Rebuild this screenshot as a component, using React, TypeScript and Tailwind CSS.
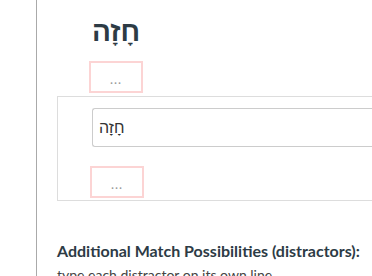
import React from 'react';

const PinkBox: React.FC = () => (
    <div className="w-[54px] h-[32px] border-2 border-[#fcd4d4] flex justify-center text-[13px] leading-none text-[#999] pt-[10px] tracking-[1px]">
        ...
    </div>
);

export default function App() {
    return (
        <div className="w-[372px] h-[276px] overflow-hidden bg-white" style={{ fontFamily: "Lato, 'DejaVu Sans', sans-serif" }}>
            <div className="ml-[36px] border-l border-[#aaa] pl-[20px] h-full">
                <div className="pl-[32px] pt-[10px]">
                    <div
                        className="text-[28px] font-bold text-[#2d3b45] leading-[44px] pl-[3px]"
                        style={{ fontFamily: "'Liberation Sans', sans-serif" }}
                    >
                        חָזָה
                    </div>
                    <div className="mt-[7px]">
                        <PinkBox />
                    </div>
                </div>
                <div className="mt-[3px] border border-[#ddd] border-r-0 h-[105px] pt-[11px] pl-[32px]">
                    <div
                        className="ml-[2px] h-[39px] border border-[#ccc] border-r-0 rounded-l-[3px] flex items-center pl-[6px] text-[16px] text-[#333]"
                        style={{ fontFamily: "'Liberation Sans', sans-serif" }}
                    >
                        חָזָה
                    </div>
                    <div className="mt-[19px]">
                        <PinkBox />
                    </div>
                </div>
                <div className="mt-[40px] text-[16px] font-bold text-[#2d3b45] leading-[20px] whitespace-nowrap">
                    Additional Match Possibilities (distractors):
                </div>
                <div className="mt-[5px] text-[14px] text-[#444] leading-[18px] whitespace-nowrap">
                    type each distractor on its own line
                </div>
            </div>
        </div>
    );
}
